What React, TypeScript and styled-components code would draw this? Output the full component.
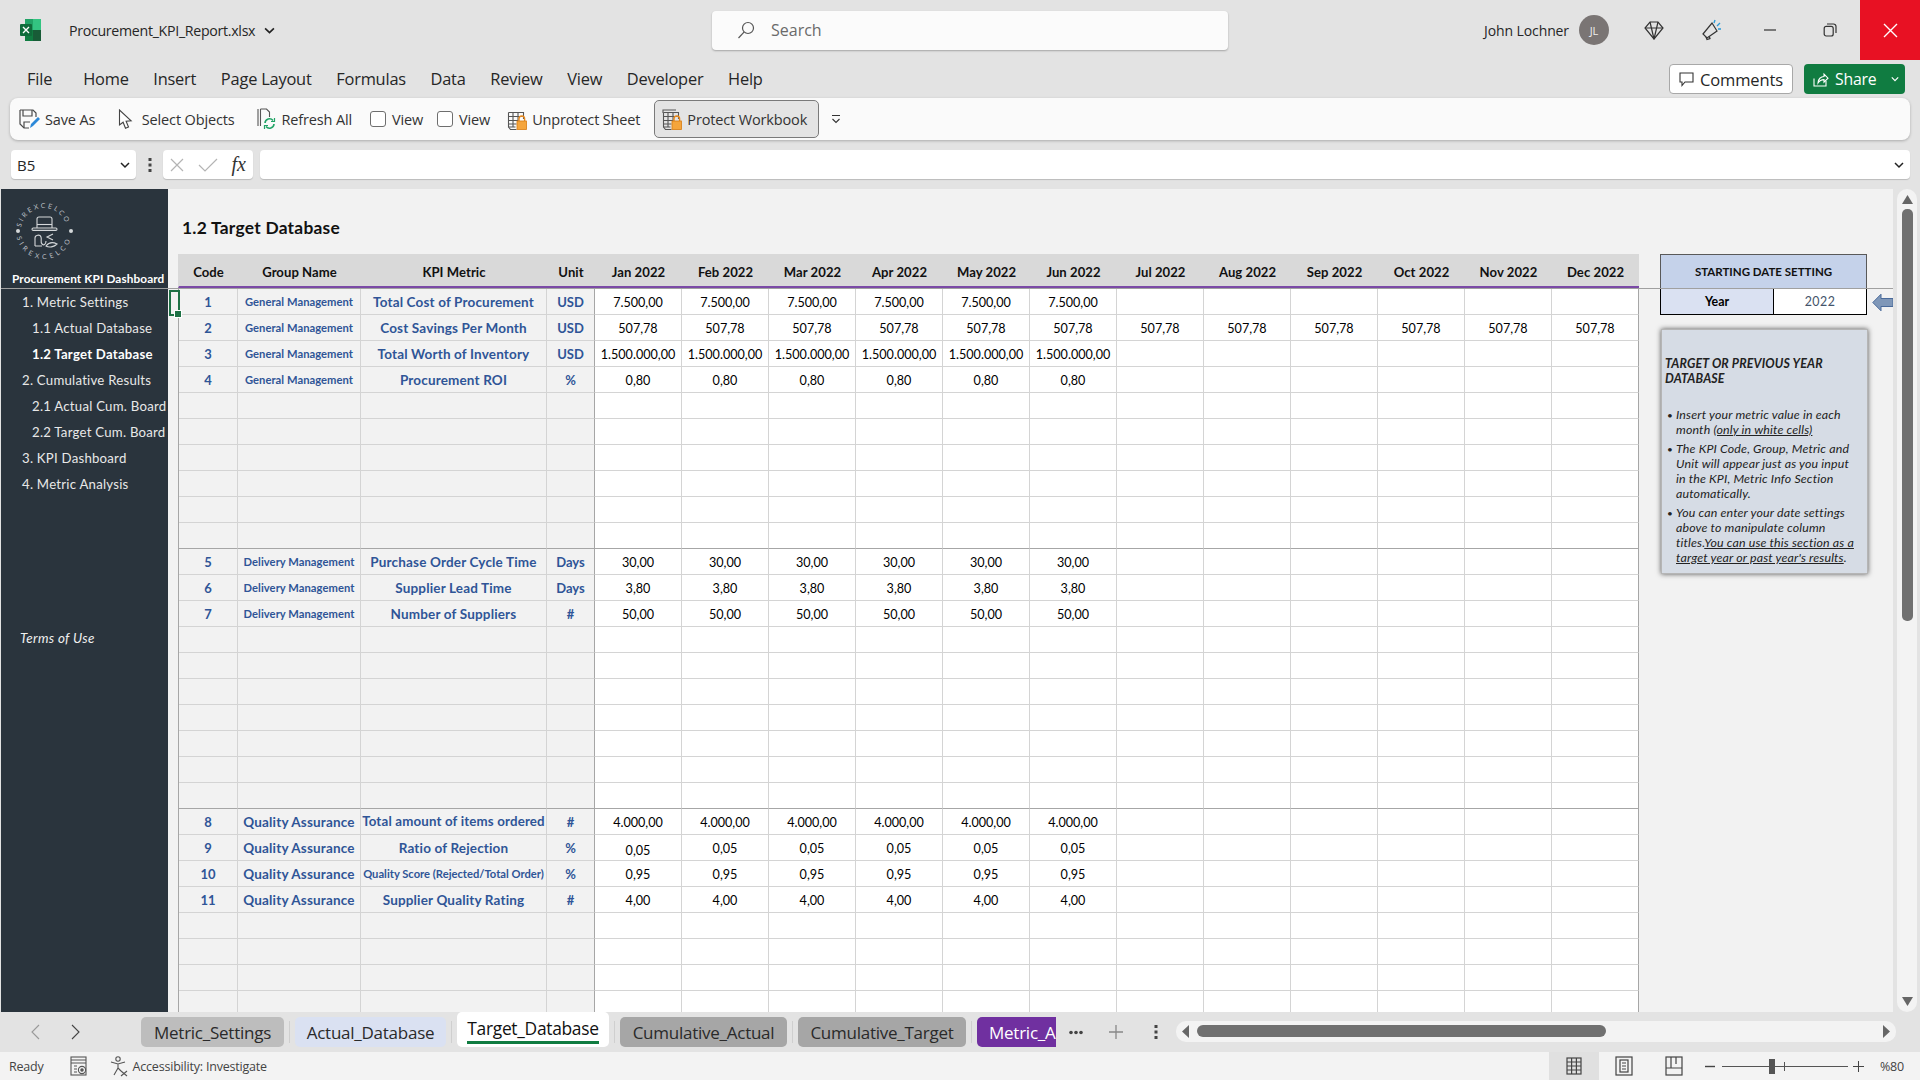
import React from "react";
import styled, { createGlobalStyle } from "styled-components";

const GlobalStyle = createGlobalStyle`
  html, body { margin: 0; padding: 0; }
  body { font-family: "Open Sans", "Liberation Sans", sans-serif; color: #262626; }
  * { box-sizing: border-box; }
`;

const Page = styled.div`
  width: 1920px;
  height: 1080px;
  overflow: hidden;
  display: flex;
  flex-direction: column;
  background: #e3e3e3;
`;

/* title bar */
const TitleBar = styled.div`
  height: 60px;
  flex: none;
  display: flex;
  align-items: center;
`;
const TitleLeft = styled.div`
  width: 712px;
  flex: none;
  display: flex;
  align-items: center;
  padding-left: 20px;
  gap: 9px;
`;
const FileName = styled.span`
  font-size: 14.2px;
  letter-spacing: -0.3px;
  margin-left: 19px;
`;
const SearchBox = styled.div`
  width: 516px;
  height: 39px;
  flex: none;
  display: flex;
  align-items: center;
  gap: 15px;
  padding-left: 24px;
  padding-bottom: 1px;
  background: #fbfbfb;
  border-radius: 4px;
  box-shadow: 0 1px 2px rgba(0, 0, 0, 0.28);
  color: #6a6a6a;
  font-size: 16px;
`;
const TitleRight = styled.div`
  flex: 1;
  display: flex;
  align-items: center;
  justify-content: flex-end;
  align-self: stretch;
`;
const UserName = styled.span`
  font-size: 14px;
  letter-spacing: -0.1px;
  margin-right: 10px;
`;
const Avatar = styled.div`
  width: 30px;
  height: 30px;
  border-radius: 50%;
  background: #7a7574;
  color: #eee;
  font-size: 11px;
  display: flex;
  align-items: center;
  justify-content: center;
  margin-right: 11px;
`;
const WinButton = styled.div<{ $close?: boolean; $nudge?: number }>`
  width: 60px;
  align-self: stretch;
  display: flex;
  align-items: center;
  justify-content: center;
  padding-left: ${(p) => p.$nudge ?? 0}px;
  background: ${(p) => (p.$close ? "#e81123" : "transparent")};
`;

/* menu row */
const MenuRow = styled.div`
  height: 38px;
  flex: none;
  display: flex;
  align-items: center;
  padding: 0 15px 0 27px;
`;
const MenuItem = styled.span<{ $first?: boolean }>`
  font-size: 16.4px;
  letter-spacing: -0.2px;
  padding-bottom: 2px;
  margin-right: ${(p) => (p.$first ? "31px" : "24.6px")};
`;
const MenuSpacer = styled.div`
  flex: 1;
`;
const CommentsButton = styled.div`
  width: 124px;
  height: 30px;
  display: flex;
  align-items: center;
  justify-content: center;
  gap: 6px;
  background: #fff;
  border: 1px solid #a8a8a8;
  border-radius: 4px;
  font-size: 16.5px;
  letter-spacing: -0.15px;
`;
const ShareButton = styled.div`
  width: 101px;
  height: 30px;
  margin-left: 11px;
  display: flex;
  align-items: center;
  gap: 6px;
  padding-left: 9px;
  background: #107c41;
  border-radius: 4px;
  color: #fff;
  font-size: 15.8px;
  letter-spacing: -0.2px;
`;
const ShareCaret = styled.span`
  margin-left: 9px;
  display: flex;
`;

/* quick access toolbar */
const QuickBar = styled.div`
  height: 42px;
  flex: none;
  margin: 0 10px;
  display: flex;
  align-items: center;
  padding-left: 9px;
  background: #fafafa;
  border-radius: 8px;
  box-shadow: 0 1px 3px rgba(0, 0, 0, 0.25);
`;
const QuickItem = styled.div<{ $gap?: number; $active?: boolean }>`
  display: flex;
  align-items: center;
  gap: 5px;
  font-size: 14.5px;
  letter-spacing: -0.15px;
  color: #333;
  margin-right: ${(p) => p.$gap ?? 0}px;
  ${(p) =>
    p.$active &&
    `
    height: 38px;
    padding: 0 11px 0 7px;
    background: #e4e4e4;
    border: 1px solid #7a7a7a;
    border-radius: 5px;
  `}
`;
const CheckBox = styled.span`
  width: 16px;
  height: 16px;
  border: 1px solid #6e6e6e;
  border-radius: 3px;
  background: #fff;
  margin-right: 1px;
`;

/* formula bar */
const FormulaRow = styled.div`
  height: 29px;
  flex: none;
  margin: 10px 10px 10px 11px;
  display: flex;
  align-items: stretch;
`;
const FieldBox = styled.div<{ $width?: number }>`
  ${(p) => (p.$width ? `width: ${p.$width}px; flex: none;` : "flex: 1;")}
  display: flex;
  align-items: center;
  background: #fff;
  border-radius: 4px;
  box-shadow: 0 1px 1px rgba(0, 0, 0, 0.18);
  padding: 0 6px;
  justify-content: space-between;
`;
const NameText = styled.span`
  font-size: 15px;
`;
const GripDots = styled.div`
  width: 27px;
  flex: none;
  display: flex;
  align-items: center;
  justify-content: center;
`;
const FxText = styled.span`
  font-family: "Liberation Serif", serif;
  font-style: italic;
  font-size: 20px;
  color: #333;
  padding-right: 1px;
`;
const InputSpacer = styled.div`
  width: 7px;
  flex: none;
`;

/* workspace */
const Workspace = styled.div`
  flex: 1;
  min-height: 0;
  display: flex;
`;
const Sidebar = styled.div`
  width: 167px;
  margin-left: 1px;
  flex: none;
  display: flex;
  flex-direction: column;
  background: #2a343d;
  color: #f0f0f0;
  font-family: Lato, "Liberation Sans", sans-serif;
`;
const SideHead = styled.div`
  height: 100px;
  flex: none;
  border-bottom: 1px solid #a0a0a0;
  display: flex;
  flex-direction: column;
  align-items: flex-start;
`;
const LogoWrap = styled.div`
  width: 70px;
  height: 70px;
  margin: 7px 0 0 8px;
`;
const SideTitle = styled.div`
  font-weight: 700;
  font-size: 11.8px;
  letter-spacing: 0.1px;
  padding-left: 11px;
  margin-top: 5px;
  white-space: nowrap;
  color: #fff;
`;
const SideLink = styled.div<{ $sub?: boolean; $current?: boolean }>`
  height: 26px;
  display: flex;
  align-items: center;
  font-size: 13.2px;
  letter-spacing: 0.24px;
  white-space: nowrap;
  padding-left: ${(p) => (p.$sub ? 31 : 21)}px;
  font-weight: ${(p) => (p.$current ? 700 : 400)};
  color: ${(p) => (p.$current ? "#fff" : "#e8e8e8")};
`;
const TermsLink = styled.div`
  margin-top: 128px;
  height: 26px;
  display: flex;
  align-items: center;
  padding-left: 19px;
  font-style: italic;
  font-size: 13.4px;
  letter-spacing: 0.35px;
`;

const Sheet = styled.div`
  width: 1725px;
  flex: none;
  display: flex;
  flex-direction: column;
  background: #f2f2f2;
  font-family: Lato, "Liberation Sans", sans-serif;
  color: #000;
`;
const FrozenPane = styled.div`
  height: 100px;
  flex: none;
  border-bottom: 1px solid #a0a0a0;
  padding-left: 10px;
  display: flex;
  flex-direction: column;
`;
const SheetTitle = styled.div`
  height: 65px;
  flex: none;
  padding: 28px 0 0 4px;
  font-weight: 700;
  font-size: 17.4px;
  letter-spacing: 0.25px;
  color: #111;
`;
const HeaderLine = styled.div`
  display: flex;
  gap: 21px;
`;
const ScrollPane = styled.div`
  flex: 1;
  min-height: 0;
  overflow: hidden;
  padding-left: 10px;
  display: flex;
  gap: 21px;
  position: relative;
`;
const ActiveCell = styled.div`
  position: absolute;
  left: 1px;
  top: 1px;
  width: 11px;
  height: 26px;
  border: 2px solid #1e7145;
  &::after {
    content: "";
    position: absolute;
    right: -4px;
    bottom: -4px;
    width: 6px;
    height: 6px;
    background: #1e7145;
    border: 1px solid #fff;
  }
`;

const TableRows = styled.div`
  width: 1461px;
  flex: none;
`;
const Row = styled.div<{ $head?: boolean }>`
  display: grid;
  grid-template-columns: 59px 123px 186px 48px repeat(12, 87px);
  height: ${(p) => (p.$head ? 34 : 26)}px;
  width: 1461px;
  flex: none;
  border-left: 1px solid ${(p) => (p.$head ? "#d9d9d9" : "#a6a6a6")};
  ${(p) => p.$head && "background: #d9d9d9; border-bottom: 2px solid #7b4aa6;"}
`;
const HeadCell = styled.div`
  display: flex;
  align-items: center;
  justify-content: center;
  padding-top: 4px;
  font-weight: 700;
  font-size: 13.1px;
  letter-spacing: 0.05px;
  color: #111;
  white-space: nowrap;
`;
const Cell = styled.div<{
  $input?: boolean;
  $edge?: boolean;
  $sectionEnd?: boolean;
  $tone?: "code" | "small" | "group" | "metric" | "unit" | "tiny" | "top";
  $drop?: boolean;
}>`
  display: flex;
  align-items: center;
  justify-content: center;
  white-space: nowrap;
  overflow: hidden;
  background: ${(p) => (p.$input ? "#fff" : "#f2f2f2")};
  border-right: 1px solid ${(p) => (p.$edge ? "#a6a6a6" : "#d4d4d4")};
  border-bottom: 1px solid ${(p) => (p.$sectionEnd ? "#a6a6a6" : "#d4d4d4")};
  font-size: 12.6px;
  ${(p) => p.$input && `padding-top: ${p.$drop ? 6 : 2}px;`}
  ${(p) => p.$tone && "color: #2f5597; font-weight: 700;"}
  ${(p) => p.$tone === "code" && "font-size: 13px; padding-top: 1px;"}
  ${(p) => p.$tone === "small" && "font-size: 11.2px; letter-spacing: 0.05px;"}
  ${(p) => p.$tone === "group" && "font-size: 13.5px; letter-spacing: 0.16px; padding-top: 1px;"}
  ${(p) => p.$tone === "metric" && "font-size: 13.5px; letter-spacing: 0.16px;"}
  ${(p) => p.$tone === "unit" && "font-size: 13px;"}
  ${(p) => p.$tone === "tiny" && "font-size: 11.2px;"}
  ${(p) => p.$tone === "top" && "font-size: 13.3px; letter-spacing: 0.16px; padding-bottom: 1px;"}
`;

/* side panel next to the table */
const DateHead = styled.div`
  width: 207px;
  height: 34px;
  flex: none;
  background: #c5d2ea;
  border: 1px solid #595959;
  border-bottom: none;
  display: flex;
  align-items: center;
  justify-content: center;
  font-size: 11.5px;
  font-weight: 700;
  color: #111;
`;
const SidePanel = styled.div`
  width: 233px;
  flex: none;
  display: flex;
  flex-direction: column;
`;
const YearRow = styled.div`
  display: flex;
  align-items: center;
  gap: 5px;
`;
const YearBox = styled.div`
  width: 207px;
  height: 26px;
  flex: none;
  display: grid;
  grid-template-columns: 113px 1fr;
  border: 1px solid #000;
  border-top: none;
`;
const YearLabel = styled.div`
  display: flex;
  align-items: center;
  justify-content: center;
  background: #dae1f2;
  border-right: 1px solid #000;
  font-weight: 700;
  font-size: 12.4px;
`;
const YearValue = styled.div`
  display: flex;
  align-items: center;
  justify-content: center;
  background: #fff;
  color: #44546a;
  font-size: 12.4px;
  letter-spacing: 0.5px;
`;
const NoteCard = styled.div`
  width: 207px;
  height: 245px;
  margin: 14px 0 0 1px;
  background: #d6dce5;
  border: 1px solid #b5b5b5;
  box-shadow: 0 0 5px rgba(0, 0, 0, 0.65);
  padding: 27px 8px 0 3px;
  font-style: italic;
  font-size: 12.4px;
  letter-spacing: 0.15px;
  line-height: 14.9px;
  color: #222;
`;
const NoteTitle = styled.div`
  font-weight: 700;
  margin-bottom: 21px;
`;
const NoteList = styled.ul`
  margin: 0;
  padding: 0 0 0 11px;
  list-style: none;
`;
const NoteItem = styled.li`
  position: relative;
  margin-bottom: 4.4px;
  &::before {
    content: "•";
    position: absolute;
    left: -9px;
    font-style: normal;
    font-size: 10px;
  }
`;
const NoteMark = styled.span`
  text-decoration: underline;
`;

/* vertical scroll */
const VScroll = styled.div`
  width: 20px;
  margin-left: 4px;
  flex: none;
  background: #f3f3f3;
  border-radius: 10px;
  display: flex;
  flex-direction: column;
  align-items: center;
  padding: 6px 0 6px;
`;
const VThumb = styled.div`
  width: 11px;
  height: 412px;
  margin-top: 5px;
  background: #707070;
  border-radius: 5px;
`;
const Grow = styled.div`
  flex: 1;
`;

/* sheet tabs */
const TabsBar = styled.div`
  height: 40px;
  flex: none;
  display: flex;
  align-items: center;
`;
const TabsNav = styled.div`
  width: 141px;
  flex: none;
  display: flex;
  padding-left: 31px;
  gap: 31px;
`;
const Tabs = styled.div`
  width: 915px;
  flex: none;
  overflow: hidden;
  display: flex;
  align-items: flex-start;
  gap: 5px;
  align-self: stretch;
`;
const Tab = styled.div<{ $width: number; $bg: string; $light?: boolean; $active?: boolean }>`
  width: ${(p) => p.$width}px;
  flex: none;
  height: ${(p) => (p.$active ? 35 : 30)}px;
  margin-top: ${(p) => (p.$active ? 0 : 5)}px;
  display: flex;
  align-items: center;
  justify-content: center;
  flex-direction: column;
  background: ${(p) => p.$bg};
  color: ${(p) => (p.$light ? "#fff" : "#2a2a2a")};
  border-radius: 5px;
  font-size: 17px;
  letter-spacing: -0.25px;
  white-space: nowrap;
  ${(p) => p.$active && "font-size: 17.4px; font-weight: 500; letter-spacing: -0.3px; color: #111;"}
`;
const ClippedTab = styled(Tab)`
  align-items: flex-start;
  padding-left: 12px;
  overflow: hidden;
  border-radius: 5px 0 0 5px;
`;
const TabUnderline = styled.div`
  width: 132px;
  height: 3px;
  margin-top: 1px;
  background: #107c41;
`;
const TabDivider = styled.div`
  width: 1px;
  height: 22px;
  flex: none;
  margin-top: 9px;
  background: #cfcfcf;
`;
const TabTool = styled.div`
  width: 40px;
  flex: none;
  display: flex;
  justify-content: center;
  align-items: center;
`;
const HScroll = styled.div`
  width: 720px;
  height: 21px;
  flex: none;
  margin-top: -2px;
  background: #f3f3f3;
  border-radius: 10px;
  display: flex;
  align-items: center;
  padding: 0 6px;
`;
const HThumb = styled.div`
  width: 409px;
  height: 12px;
  margin-left: 8px;
  background: #707070;
  border-radius: 6px;
`;

/* status bar */
const StatusBar = styled.div`
  height: 28px;
  flex: none;
  display: flex;
  align-items: center;
  padding: 0 16px 0 9px;
  background: #f3f3f3;
  font-size: 12.5px;
  letter-spacing: -0.2px;
  color: #444;
`;
const StatusItem = styled.span<{ $gap?: number }>`
  display: flex;
  align-items: center;
  margin-left: ${(p) => p.$gap ?? 0}px;
`;
const ViewButton = styled.div<{ $active?: boolean }>`
  width: 50px;
  align-self: stretch;
  display: flex;
  align-items: center;
  justify-content: center;
  background: ${(p) => (p.$active ? "#e0e0e0" : "transparent")};
`;
const ZoomTrack = styled.div`
  width: 126px;
  height: 1px;
  margin: 0 5px 0 7px;
  background: #555;
  position: relative;
`;
const ZoomThumb = styled.div`
  position: absolute;
  left: 47px;
  top: -7px;
  width: 6px;
  height: 15px;
  background: #555;
`;
const ZoomTick = styled.div`
  position: absolute;
  left: 62px;
  top: -4px;
  width: 1px;
  height: 9px;
  background: #555;
`;

const ExcelLogo = () => (
  <svg width="21" height="22" viewBox="0 0 21 22">
    <rect x="5" y="0" width="16" height="11" fill="#33c481" />
    <rect x="5" y="11" width="16" height="11" fill="#107c41" />
    <rect x="5" y="0" width="8" height="11" fill="#21a366" />
    <rect x="13" y="11" width="8" height="11" fill="#185c37" />
    <rect x="0" y="5" width="12" height="12" rx="1" fill="#0f6b3a" />
    <path d="M3 8l6 6M9 8l-6 6" stroke="#fff" strokeWidth="1.4" />
  </svg>
);

const Chevron = ({ size = 10, color = "#222" }: { size?: number; color?: string }) => (
  <svg width={size} height={size} viewBox="0 0 10 10" fill="none">
    <path d="M1 3l4 4 4-4" stroke={color} strokeWidth="1.5" />
  </svg>
);

const SirexLogo = () => (
  <svg width="70" height="70" viewBox="0 0 70 70">
    <defs>
      <path id="arcTop" d="M12 35A23 23 0 0 1 58 35" />
      <path id="arcBot" d="M7 35A28 28 0 0 0 63 35" />
    </defs>
    <g fill="#b9bec2" fontFamily="Lato, sans-serif" fontSize="6.8">
      <text letterSpacing="2.2">
        <textPath href="#arcTop" startOffset="5%">SIREXCELCO</textPath>
      </text>
      <text letterSpacing="3.6">
        <textPath href="#arcBot" startOffset="7%">SIREXCELCO</textPath>
      </text>
    </g>
    <circle cx="9" cy="35" r="2" fill="#d5d8da" />
    <circle cx="62" cy="35" r="2" fill="#d5d8da" />
    <g fill="none" stroke="#d5d8da" strokeWidth="1.1">
      <path d="M28 32V23a2 2 0 0 1 2-2h11a2 2 0 0 1 2 2v9" />
      <path d="M28 28.5h15" />
      <rect x="23" y="32" width="25" height="2.4" rx="1.2" />
      <path d="M26 50v-8c0-3 5-4 6-1 1 3-1 5 1 7 2 2 4 0 4-3M33 50h-7" />
      <path d="M37 50c3-4 7-4 11-2-3 3-8 4-11 2z" />
      <path d="M44 38l-6 3 6 3" />
    </g>
  </svg>
);

const SearchGlyph = () => (
  <svg width="20" height="20" viewBox="0 0 20 20" fill="none" stroke="#555" strokeWidth="1.2">
    <circle cx="12" cy="8" r="5.5" />
    <path d="M8 12.2L2.5 18" />
  </svg>
);
const DiamondGlyph = () => (
  <svg width="20" height="20" viewBox="0 0 20 20" fill="none" stroke="#333" strokeWidth="1.2">
    <path d="M6 2h8l5 6-9 11L1 8z" />
    <path d="M1 8h18M6 2l4 17M14 2l-4 17" />
  </svg>
);
const MegaphoneGlyph = () => (
  <svg width="22" height="22" viewBox="0 0 22 22" fill="none" strokeWidth="1.2">
    <path d="M2 15L11 4l5 8-10 7z" stroke="#333" />
    <path d="M5 18l1 2.5 3-1-.8-2.3" stroke="#333" />
    <path d="M13 4l1-3M16 7l3-3M17 10h3" stroke="#2b9bd8" strokeWidth="1.4" />
  </svg>
);
const MinGlyph = () => (
  <svg width="14" height="14" viewBox="0 0 14 14" stroke="#333" strokeWidth="1.2">
    <path d="M1 7h12" />
  </svg>
);
const RestoreGlyph = () => (
  <svg width="14" height="14" viewBox="0 0 14 14" fill="none" stroke="#333" strokeWidth="1.2">
    <rect x="1.2" y="3.4" width="9" height="9.6" rx="2" />
    <path d="M4 1h6.5A2.5 2.5 0 0 1 13 3.5V10" />
  </svg>
);
const CloseGlyph = () => (
  <svg width="15" height="15" viewBox="0 0 15 15" stroke="#fff" strokeWidth="1.4">
    <path d="M1 1l13 13M14 1L1 14" />
  </svg>
);
const CommentGlyph = () => (
  <svg width="15" height="15" viewBox="0 0 15 15" fill="none" stroke="#333" strokeWidth="1.1">
    <path d="M1 1h13v9H6l-3 3.5V10H1z" />
  </svg>
);
const ShareGlyph = () => (
  <svg width="16" height="16" viewBox="0 0 16 16" fill="none" stroke="#fff" strokeWidth="1.1">
    <path d="M1 7.5V15h12V10" />
    <path d="M5 12c0-4 3-6.5 6-6.5V3l4 4.2-4 4V8.6c-3 0-4.5 1-6 3.4z" />
  </svg>
);
const SaveGlyph = () => (
  <svg width="21" height="21" viewBox="0 0 21 21" fill="none">
    <path d="M1 1h13l3 3v4M1 1v14l4 4h5" stroke="#4a4a4a" strokeWidth="1.2" />
    <path d="M4 1v6h9V1M5 19v-6h6" stroke="#4a4a4a" strokeWidth="1.2" />
    <path d="M11 19l1-4 7-7 2 2-7 7z" fill="#2b88d8" />
  </svg>
);
const PointerGlyph = () => (
  <svg width="15" height="21" viewBox="0 0 15 21" fill="#fff" stroke="#444" strokeWidth="1.1">
    <path d="M1.5 1v15l3.6-2.8 2.4 6 3-1.2-2.4-5.8 5-.4z" />
  </svg>
);
const RefreshGlyph = () => (
  <svg width="19" height="22" viewBox="0 0 19 22" fill="none">
    <path d="M1 1v17M3.5 1h6l3 3v5M3.5 1v17" stroke="#555" strokeWidth="1.1" />
    <path d="M8 15a4.5 4.5 0 0 1 8-2.5M17 16a4.5 4.5 0 0 1-8 2.5" stroke="#21a366" strokeWidth="1.6" />
    <path d="M14 13.5h3.5V10M11 17.5H7.5V21" stroke="#21a366" strokeWidth="1.2" />
  </svg>
);
const LockedSheetGlyph = ({ back }: { back?: boolean }) => (
  <svg width="20" height="21" viewBox="0 0 20 21" fill="none">
    {back && <path d="M1 4V1h13" stroke="#555" strokeWidth="1.1" />}
    <path
      d="M1.5 3.5h15V10M1.5 3.5V18h7M1.5 7.5h15M1.5 11.5h10M1.5 15h8M6 3.5V18M11 3.5v8"
      stroke="#555"
      strokeWidth="1.1"
    />
    <path d="M1.5 18l2 2.5h6" stroke="#555" strokeWidth="1.1" />
    <path d="M12 12V9.8a2.8 2.8 0 0 1 5.6 0V12" stroke="#e8891c" strokeWidth="1.4" />
    <rect x="10" y="12" width="9.5" height="8.5" fill="#f5a53c" stroke="#d87c12" strokeWidth="0.8" />
  </svg>
);
const CustomizeGlyph = () => (
  <svg width="10" height="10" viewBox="0 0 10 10" fill="none" stroke="#333" strokeWidth="1.1">
    <path d="M1 1.5h8M1.5 5l3.5 3.5L8.5 5" />
  </svg>
);
const CrossGlyph = () => (
  <svg width="16" height="16" viewBox="0 0 16 16" stroke="#b4b4b4" strokeWidth="1.2">
    <path d="M2 2l12 12M14 2L2 14" />
  </svg>
);
const CheckGlyph = () => (
  <svg width="20" height="16" viewBox="0 0 20 16" fill="none" stroke="#b4b4b4" strokeWidth="1.2">
    <path d="M1 8l6 6L19 2" />
  </svg>
);
const VerticalDots = ({ h = 14, color = "#444" }: { h?: number; color?: string }) => (
  <svg width="4" height={h} viewBox="0 0 4 14" fill={color}>
    <rect x="0.5" y="0" width="3" height="3" />
    <rect x="0.5" y="5.5" width="3" height="3" />
    <rect x="0.5" y="11" width="3" height="3" />
  </svg>
);
const ArrowLeftBlue = () => (
  <svg width="21" height="19" viewBox="0 0 21 19">
    <path d="M0.8 9.5L9 1.2V5.5H21V13.5H9V17.8z" fill="#7f97b8" stroke="#4a6a9a" strokeWidth="1" />
  </svg>
);
const NavArrow = ({ dir, color }: { dir: "l" | "r"; color: string }) => (
  <svg width="9" height="16" viewBox="0 0 9 16" fill="none" stroke={color} strokeWidth="1.1">
    <path d={dir === "l" ? "M8 1L1 8l7 7" : "M1 1l7 7-7 7"} />
  </svg>
);
const Triangle = ({ dir, w = 11, h = 9 }: { dir: "u" | "d" | "l" | "r"; w?: number; h?: number }) => {
  const d = {
    u: "M0 9L5.5 0 11 9z",
    d: "M0 0h11L5.5 9z",
    l: "M9 0v11L0 5.5z",
    r: "M0 0v11l9-5.5z",
  }[dir];
  const box = dir === "u" || dir === "d" ? "0 0 11 9" : "0 0 9 11";
  return (
    <svg width={w} height={h} viewBox={box} fill="#666" preserveAspectRatio="none">
      <path d={d} />
    </svg>
  );
};
const MacroGlyph = () => (
  <svg width="18" height="20" viewBox="0 0 18 20" fill="none" stroke="#555" strokeWidth="1.1">
    <rect x="1" y="1" width="15" height="18" />
    <path d="M1 4h15M1 7h15" />
    <path d="M4 10h3M4 13h3M4 16h3" />
    <circle cx="12" cy="14" r="3.6" />
    <circle cx="12" cy="14" r="1.2" fill="#555" />
  </svg>
);
const AccessGlyph = () => (
  <svg width="19" height="21" viewBox="0 0 19 21" fill="none" stroke="#555" strokeWidth="1.1">
    <circle cx="8" cy="3" r="2.2" />
    <path d="M1 6l7 2 7-2M8 8v4M8 12l-4 7M8 12l3 3" />
    <path d="M11 15l6 5M17 15l-6 5" />
  </svg>
);
const GridView = () => (
  <svg width="16" height="18" viewBox="0 0 16 18" fill="none" stroke="#444" strokeWidth="1.2">
    <rect x="1" y="1" width="14" height="16" />
    <path d="M1 5h14M1 9h14M1 13h14M5.6 1v16M10.4 1v16" />
  </svg>
);
const PageView = () => (
  <svg width="18" height="20" viewBox="0 0 18 20" fill="none" stroke="#444" strokeWidth="1.2">
    <rect x="1" y="1" width="16" height="18" />
    <rect x="5" y="4" width="8" height="12" />
    <path d="M7 7h4M7 10h4M7 13h4" />
  </svg>
);
const BreakView = () => (
  <svg width="18" height="20" viewBox="0 0 18 20" fill="none" stroke="#444" strokeWidth="1.2">
    <rect x="1" y="1" width="16" height="18" />
    <path d="M1 12h16M6 1v11M11 1v7" />
  </svg>
);
const PlusGlyph = ({ size = 13, color = "#444" }: { size?: number; color?: string }) => (
  <svg width={size} height={size} viewBox="0 0 13 13" stroke={color} strokeWidth="1.2">
    <path d="M6.5 0v13M0 6.5h13" />
  </svg>
);
const MinusGlyph = () => (
  <svg width="10" height="3" viewBox="0 0 10 3" stroke="#444" strokeWidth="1.4">
    <path d="M0 1.5h10" />
  </svg>
);
const MoreDots = () => (
  <svg width="14" height="5" viewBox="0 0 14 5" fill="#444">
    <circle cx="2" cy="2.5" r="1.8" />
    <circle cx="7" cy="2.5" r="1.8" />
    <circle cx="12" cy="2.5" r="1.8" />
  </svg>
);

const months = ["Jan", "Feb", "Mar", "Apr", "May", "Jun", "Jul", "Aug", "Sep", "Oct", "Nov", "Dec"];

type KpiRow = {
  code: number;
  group: string;
  metric: string;
  unit: string;
  value: string;
  full?: boolean;
  groupTone?: "small" | "group";
  metricTone?: "metric" | "tiny" | "top";
  drop?: boolean;
};

const kpis: Record<number, KpiRow> = {
  0: { code: 1, group: "General Management", metric: "Total Cost of Procurement", unit: "USD", value: "7.500,00" },
  1: { code: 2, group: "General Management", metric: "Cost Savings Per Month", unit: "USD", value: "507,78", full: true },
  2: { code: 3, group: "General Management", metric: "Total Worth of Inventory", unit: "USD", value: "1.500.000,00" },
  3: { code: 4, group: "General Management", metric: "Procurement ROI", unit: "%", value: "0,80" },
  10: { code: 5, group: "Delivery Management", metric: "Purchase Order Cycle Time", unit: "Days", value: "30,00" },
  11: { code: 6, group: "Delivery Management", metric: "Supplier Lead Time", unit: "Days", value: "3,80" },
  12: { code: 7, group: "Delivery Management", metric: "Number of Suppliers", unit: "#", value: "50,00" },
  20: { code: 8, group: "Quality Assurance", groupTone: "group", metric: "Total amount of items ordered", metricTone: "top", unit: "#", value: "4.000,00" },
  21: { code: 9, group: "Quality Assurance", groupTone: "group", metric: "Ratio of Rejection", unit: "%", value: "0,05", drop: true },
  22: { code: 10, group: "Quality Assurance", groupTone: "group", metric: "Quality Score (Rejected/Total Order)", metricTone: "tiny", unit: "%", value: "0,95" },
  23: { code: 11, group: "Quality Assurance", groupTone: "group", metric: "Supplier Quality Rating", unit: "#", value: "4,00" },
};

const rowIndexes = Array.from({ length: 28 }, (_, i) => i);

function TableRow({ index }: { index: number }) {
  const kpi = kpis[index];
  const sectionEnd = index === 9 || index === 19;
  return (
    <Row>
      <Cell $sectionEnd={sectionEnd} $tone="code">{kpi?.code}</Cell>
      <Cell $sectionEnd={sectionEnd} $tone={kpi?.groupTone ?? "small"}>{kpi?.group}</Cell>
      <Cell $sectionEnd={sectionEnd} $tone={kpi?.metricTone ?? "metric"}>{kpi?.metric}</Cell>
      <Cell $sectionEnd={sectionEnd} $edge $tone="unit">{kpi?.unit}</Cell>
      {months.map((m, i) => (
        <Cell key={m} $input $sectionEnd={sectionEnd} $edge={i === 11} $drop={kpi?.drop && i === 0}>
          {kpi && (i < 6 || kpi.full) ? kpi.value : ""}
        </Cell>
      ))}
    </Row>
  );
}

export default function App() {
  return (
    <Page>
      <GlobalStyle />
      <TitleBar>
        <TitleLeft>
          <ExcelLogo />
          <FileName>Procurement_KPI_Report.xlsx</FileName>
          <Chevron size={11} />
        </TitleLeft>
        <SearchBox>
          <SearchGlyph />
          Search
        </SearchBox>
        <TitleRight>
          <UserName>John Lochner</UserName>
          <Avatar>JL</Avatar>
          <WinButton $nudge={7}><DiamondGlyph /></WinButton>
          <WinButton $nudge={4}><MegaphoneGlyph /></WinButton>
          <WinButton><MinGlyph /></WinButton>
          <WinButton><RestoreGlyph /></WinButton>
          <WinButton $close><CloseGlyph /></WinButton>
        </TitleRight>
      </TitleBar>

      <MenuRow>
        <MenuItem $first>File</MenuItem>
        <MenuItem>Home</MenuItem>
        <MenuItem>Insert</MenuItem>
        <MenuItem>Page Layout</MenuItem>
        <MenuItem>Formulas</MenuItem>
        <MenuItem>Data</MenuItem>
        <MenuItem>Review</MenuItem>
        <MenuItem>View</MenuItem>
        <MenuItem>Developer</MenuItem>
        <MenuItem>Help</MenuItem>
        <MenuSpacer />
        <CommentsButton><CommentGlyph />Comments</CommentsButton>
        <ShareButton>
          <ShareGlyph />
          Share
          <ShareCaret><Chevron size={8} color="#fff" /></ShareCaret>
        </ShareButton>
      </MenuRow>

      <QuickBar>
        <QuickItem $gap={23}><SaveGlyph />Save As</QuickItem>
        <QuickItem $gap={23}><PointerGlyph />&nbsp;Select Objects</QuickItem>
        <QuickItem $gap={18}><RefreshGlyph />Refresh All</QuickItem>
        <QuickItem $gap={14}><CheckBox />View</QuickItem>
        <QuickItem $gap={17}><CheckBox />View</QuickItem>
        <QuickItem $gap={14}><LockedSheetGlyph />Unprotect Sheet</QuickItem>
        <QuickItem $active $gap={12}><LockedSheetGlyph back />Protect Workbook</QuickItem>
        <CustomizeGlyph />
      </QuickBar>

      <FormulaRow>
        <FieldBox $width={125}>
          <NameText>B5</NameText>
          <Chevron size={10} />
        </FieldBox>
        <GripDots><VerticalDots /></GripDots>
        <FieldBox $width={90}>
          <CrossGlyph />
          <CheckGlyph />
          <FxText>fx</FxText>
        </FieldBox>
        <InputSpacer />
        <FieldBox>
          <span />
          <Chevron size={10} />
        </FieldBox>
      </FormulaRow>

      <Workspace>
        <Sidebar>
          <SideHead>
            <LogoWrap><SirexLogo /></LogoWrap>
            <SideTitle>Procurement KPI Dashboard</SideTitle>
          </SideHead>
          <SideLink>1. Metric Settings</SideLink>
          <SideLink $sub>1.1 Actual Database</SideLink>
          <SideLink $sub $current>1.2 Target Database</SideLink>
          <SideLink>2. Cumulative Results</SideLink>
          <SideLink $sub>2.1 Actual Cum. Board</SideLink>
          <SideLink $sub>2.2 Target Cum. Board</SideLink>
          <SideLink>3. KPI Dashboard</SideLink>
          <SideLink>4. Metric Analysis</SideLink>
          <TermsLink>Terms of Use</TermsLink>
        </Sidebar>

        <Sheet>
          <FrozenPane>
            <SheetTitle>1.2 Target Database</SheetTitle>
            <HeaderLine>
              <Row $head>
                <HeadCell>Code</HeadCell>
                <HeadCell>Group Name</HeadCell>
                <HeadCell>KPI Metric</HeadCell>
                <HeadCell>Unit</HeadCell>
                {months.map((m) => (
                  <HeadCell key={m}>{m} 2022</HeadCell>
                ))}
              </Row>
              <DateHead>STARTING DATE SETTING</DateHead>
            </HeaderLine>
          </FrozenPane>
          <ScrollPane>
            <ActiveCell />
            <TableRows>
              {rowIndexes.map((i) => (
                <TableRow key={i} index={i} />
              ))}
            </TableRows>
            <SidePanel>
              <YearRow>
                <YearBox>
                  <YearLabel>Year</YearLabel>
                  <YearValue>2022</YearValue>
                </YearBox>
                <ArrowLeftBlue />
              </YearRow>
              <NoteCard>
                <NoteTitle>TARGET OR PREVIOUS YEAR DATABASE</NoteTitle>
                <NoteList>
                  <NoteItem>
                    Insert your metric value in each month <NoteMark>(only in white cells)</NoteMark>
                  </NoteItem>
                  <NoteItem>
                    The KPI Code, Group, Metric and Unit will appear just as you input in the KPI, Metric Info Section automatically.
                  </NoteItem>
                  <NoteItem>
                    You can enter your date settings above to manipulate column titles.
                    <NoteMark>You can use this section as a target year or past year's results</NoteMark>.
                  </NoteItem>
                </NoteList>
              </NoteCard>
            </SidePanel>
          </ScrollPane>
        </Sheet>

        <VScroll>
          <Triangle dir="u" />
          <VThumb />
          <Grow />
          <Triangle dir="d" />
        </VScroll>
      </Workspace>

      <TabsBar>
        <TabsNav>
          <NavArrow dir="l" color="#999" />
          <NavArrow dir="r" color="#444" />
        </TabsNav>
        <Tabs>
          <Tab $width={143} $bg="#bdbdbd">Metric_Settings</Tab>
          <TabDivider />
          <Tab $width={151} $bg="#dae1f2">Actual_Database</Tab>
          <TabDivider />
          <Tab $width={152} $bg="#fff" $active>
            Target_Database
            <TabUnderline />
          </Tab>
          <TabDivider />
          <Tab $width={167} $bg="#a6a6a6">Cumulative_Actual</Tab>
          <TabDivider />
          <Tab $width={168} $bg="#a6a6a6">Cumulative_Target</Tab>
          <TabDivider />
          <ClippedTab $width={79} $bg="#7030a0" $light>Metric_A</ClippedTab>
        </Tabs>
        <TabTool><MoreDots /></TabTool>
        <TabTool><PlusGlyph size={14} color="#888" /></TabTool>
        <TabTool><VerticalDots h={14} color="#444" /></TabTool>
        <HScroll>
          <Triangle dir="l" w={7} h={13} />
          <HThumb />
          <Grow />
          <Triangle dir="r" w={7} h={13} />
        </HScroll>
      </TabsBar>

      <StatusBar>
        Ready
        <StatusItem $gap={26}><MacroGlyph /></StatusItem>
        <StatusItem $gap={22}><AccessGlyph /></StatusItem>
        <StatusItem $gap={4}>Accessibility: Investigate</StatusItem>
        <Grow />
        <ViewButton $active><GridView /></ViewButton>
        <ViewButton><PageView /></ViewButton>
        <ViewButton><BreakView /></ViewButton>
        <StatusItem $gap={6}><MinusGlyph /></StatusItem>
        <ZoomTrack>
          <ZoomThumb />
          <ZoomTick />
        </ZoomTrack>
        <PlusGlyph size={11} />
        <StatusItem $gap={16}>%80</StatusItem>
      </StatusBar>
    </Page>
  );
}
